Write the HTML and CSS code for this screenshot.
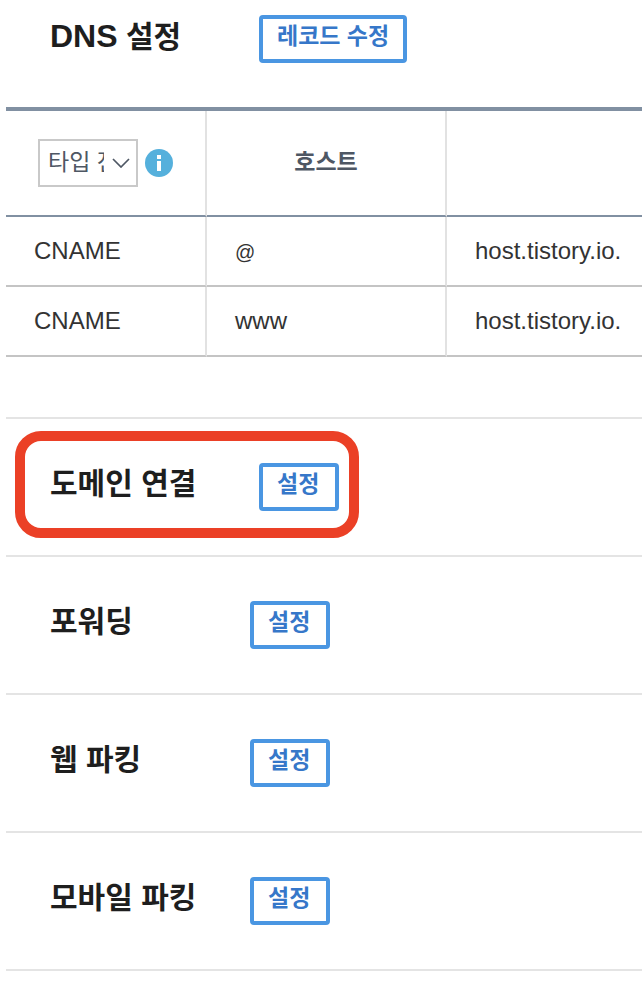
FILE: index.html
```
<!DOCTYPE html>
<html lang="ko">
<head>
  <meta charset="utf-8">
  <title>DNS 설정</title>
  <meta name="viewport" content="width=device-width, initial-scale=1.0">
  <link rel="stylesheet" href="styles.css">
</head>
<body>
  <main class="settings">
    <!-- DNS records -->
    <section class="row row-dns">
      <div class="row-inner">
        <h2 class="title title-wide"><span class="latin">DNS</span> 설정</h2>
        <button type="button" class="btn">레코드 수정</button>
      </div>
    </section>

    <table class="records">
      <colgroup>
        <col class="col-type">
        <col class="col-host">
        <col>
      </colgroup>
      <thead>
        <tr>
          <th>
            <div class="type-filter">
              <div class="select-box">
                <select aria-label="타입">
                  <option>타입 전체</option>
                  <option>CNAME</option>
                </select>
                <svg class="chevron" viewBox="0 0 18 10" aria-hidden="true">
                  <path d="M1 1l8 8 8-8" fill="none" stroke="#4e5764" stroke-width="1.7"/>
                </svg>
              </div>
              <svg class="info" viewBox="0 0 28 28" aria-hidden="true">
                <circle cx="14" cy="14" r="14" fill="#55b0dc"/>
                <path d="M12 6h4v4h-4zM12 12h4v10h-4z" fill="#fff"/>
              </svg>
            </div>
          </th>
          <th class="host">호스트</th>
          <th></th>
        </tr>
      </thead>
      <tbody>
        <tr>
          <td>CNAME</td>
          <td><span class="at">@</span></td>
          <td>host.tistory.io.</td>
        </tr>
        <tr>
          <td>CNAME</td>
          <td>www</td>
          <td>host.tistory.io.</td>
        </tr>
      </tbody>
    </table>

    <!-- Other settings -->
    <div class="options">
      <section class="row">
        <div class="row-inner highlight">
          <h2 class="title title-wide">도메인 연결</h2>
          <button type="button" class="btn">설정</button>
        </div>
      </section>
      <section class="row">
        <div class="row-inner">
          <h2 class="title">포워딩</h2>
          <button type="button" class="btn">설정</button>
        </div>
      </section>
      <section class="row">
        <div class="row-inner">
          <h2 class="title">웹 파킹</h2>
          <button type="button" class="btn">설정</button>
        </div>
      </section>
      <section class="row">
        <div class="row-inner">
          <h2 class="title">모바일 파킹</h2>
          <button type="button" class="btn">설정</button>
        </div>
      </section>
    </div>
  </main>
</body>
</html>
```
FILE: styles.css
```
* {
  box-sizing: border-box;
}

body {
  margin: 0;
  background: #fff;
  color: #333;
  font-family: "Liberation Sans", "Noto Sans CJK KR", sans-serif;
  font-size: 24px;
}

.settings {
  padding-left: 6px;
}

/* Setting rows */
.row {
  padding: 44px;
  border-bottom: 2px solid #e4e4e4;
}

.row-dns {
  padding-top: 15px;
  border-bottom: none;
}

.row-inner {
  display: inline-flex;
  align-items: flex-start;
  vertical-align: top;
}

.title {
  width: 200px;
  margin: 0;
  color: #1e1e1e;
  font-size: 30px;
  font-weight: bold;
  line-height: 42px;
  white-space: nowrap;
}

.title-wide {
  width: 209px;
}

.latin {
  font-size: 32px;
}

.btn {
  min-width: 80px;
  height: 48px;
  padding: 0 14px 6px;
  border: 4px solid #4a96e2;
  border-radius: 4px;
  background: #fff;
  color: #3677c9;
  font-family: inherit;
  font-size: 23px;
  font-weight: bold;
  line-height: 34px;
  text-align: left;
  white-space: nowrap;
  cursor: pointer;
}

/* Red frame around the active setting */
.highlight {
  position: relative;
}

.highlight::after {
  content: "";
  position: absolute;
  top: -32px;
  right: -20px;
  bottom: -27px;
  left: -35px;
  border: 10px solid #eb4026;
  border-radius: 26px;
  pointer-events: none;
}

/* Record table */
.records {
  width: 100%;
  table-layout: fixed;
  border-collapse: separate;
  border-spacing: 0;
  border-top: 4px solid #8190a2;
}

.col-type {
  width: 201px;
}

.col-host {
  width: 240px;
}

.records th,
.records td {
  padding: 0 0 0 28px;
  border-right: 2px solid #e2e2e2;
  border-bottom: 2px solid #c4c4c4;
  text-align: left;
  white-space: nowrap;
}

.records th {
  height: 106px;
  padding: 0;
  border-bottom-color: #8190a2;
  text-align: center;
}

.records .host {
  padding-bottom: 6px;
  color: #4e5764;
  font-size: 23px;
}

.records td {
  height: 70px;
}

.records th:last-child,
.records td:last-child {
  border-right: none;
}

.type-filter {
  display: flex;
  align-items: center;
  gap: 7px;
  padding-left: 32px;
}

.select-box {
  position: relative;
  width: 100px;
  height: 48px;
}

.select-box select {
  appearance: none;
  width: 100%;
  height: 100%;
  padding: 0 32px 2px 8px;
  border: 2px solid #c9c9c9;
  border-radius: 0;
  background: #fff;
  color: #4e5764;
  font-family: inherit;
  font-size: 23px;
}

.chevron {
  position: absolute;
  top: 19px;
  right: 8px;
  width: 18px;
  height: 10px;
  pointer-events: none;
}

.info {
  width: 28px;
  height: 28px;
}

.at {
  font-size: 20px;
}

.options {
  margin-top: 60px;
  border-top: 2px solid #e4e4e4;
}
```
